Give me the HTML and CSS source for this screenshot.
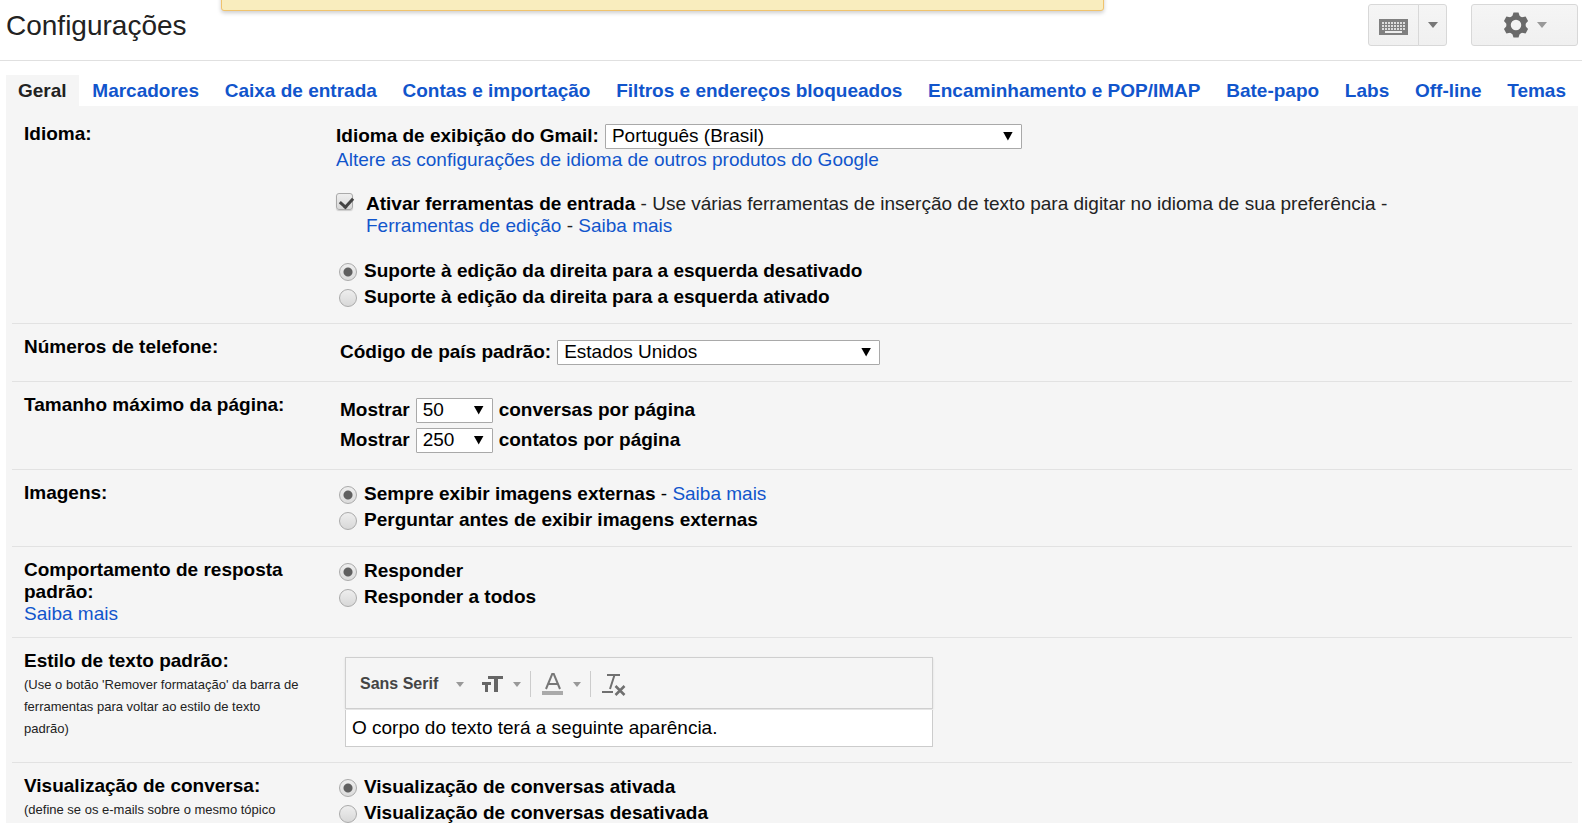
FILE: index.html
```html
<!DOCTYPE html>
<html lang="pt-BR">
<head>
<meta charset="utf-8">
<title>Configurações</title>
<link rel="stylesheet" href="styles.css">
</head>
<body>
<div class="notice"></div>
<header class="header">
  <h1 class="title">Configurações</h1>
  <div class="tools">
    <div class="split">
      <button class="btn keyboard" type="button" aria-label="Ferramentas de entrada">
        <svg width="30" height="18" viewBox="0 0 30 18"><rect x="0" y="1" width="29" height="16" fill="#808080"/><path d="M3 5h23M3 8h23M3 11h23" stroke="#ddd" stroke-width="2" stroke-dasharray="2 1"/><path d="M6 14h17" stroke="#eee" stroke-width="2"/></svg>
      </button>
      <button class="btn more" type="button" aria-label="Mais ferramentas"><span class="caret dark"></span></button>
    </div>
    <button class="btn gear" type="button" aria-label="Configurações">
      <svg width="26" height="26" viewBox="-13 -13 26 26"><circle r="7.500" fill="none" stroke="#6a6a6a" stroke-width="4.500"/><g id="teeth" fill="#6a6a6a"><path id="tooth" d="M-4-8L-2.500-12.500h5L4-8z"/><use href="#tooth" transform="rotate(60)"/><use href="#tooth" transform="rotate(120)"/><use href="#tooth" transform="rotate(180)"/><use href="#tooth" transform="rotate(240)"/><use href="#tooth" transform="rotate(300)"/></g></svg>
      <span class="caret"></span>
    </button>
  </div>
</header>
<nav class="tabs">
  <a class="tab active" href="#geral">Geral</a>
  <a class="tab" href="#marcadores">Marcadores</a>
  <a class="tab" href="#caixa">Caixa de entrada</a>
  <a class="tab" href="#contas">Contas e importação</a>
  <a class="tab" href="#filtros">Filtros e endereços bloqueados</a>
  <a class="tab" href="#encaminhamento">Encaminhamento e POP/IMAP</a>
  <a class="tab" href="#batepapo">Bate-papo</a>
  <a class="tab" href="#labs">Labs</a>
  <a class="tab" href="#offline">Off-line</a>
  <a class="tab" href="#temas">Temas</a>
</nav>
<main class="panel">
  <section class="row">
    <div class="name"><h2>Idioma:</h2></div>
    <div class="language">
      <div class="display">
        <label for="lang">Idioma de exibição do Gmail:</label>
        <span class="select wide"><select id="lang"><option>Português (Brasil)</option></select></span>
      </div>
      <a href="#idiomas">Altere as configurações de idioma de outros produtos do Google</a>
      <div class="input-tools">
        <input class="check" type="checkbox" id="tools" checked>
        <p><label for="tools">Ativar ferramentas de entrada</label> - Use várias ferramentas de inserção de texto para digitar no idioma de sua preferência - <br><a href="#edicao">Ferramentas de edição</a> - <a href="#ajuda">Saiba mais</a></p>
      </div>
      <div class="radios">
        <div class="choice"><input type="radio" name="rtl" id="rtl0" checked><label for="rtl0">Suporte à edição da direita para a esquerda desativado</label></div>
        <div class="choice"><input type="radio" name="rtl" id="rtl1"><label for="rtl1">Suporte à edição da direita para a esquerda ativado</label></div>
      </div>
    </div>
  </section>
  <section class="row">
    <div class="name"><h2>Números de telefone:</h2></div>
    <div class="selects">
      <div class="line"><label for="country">Código de país padrão:</label><span class="select medium"><select id="country"><option>Estados Unidos</option></select></span></div>
    </div>
  </section>
  <section class="row">
    <div class="name"><h2>Tamanho máximo da página:</h2></div>
    <div class="selects">
      <div class="line"><label for="conv">Mostrar</label><span class="select small"><select id="conv"><option>50</option></select></span><b>conversas por página</b></div>
      <div class="line"><label for="cont">Mostrar</label><span class="select small"><select id="cont"><option>250</option></select></span><b>contatos por página</b></div>
    </div>
  </section>
  <section class="row">
    <div class="name"><h2>Imagens:</h2></div>
    <div class="radios">
      <div class="choice"><input type="radio" name="img" id="img0" checked><span><label for="img0">Sempre exibir imagens externas</label> - <a href="#imagens">Saiba mais</a></span></div>
      <div class="choice"><input type="radio" name="img" id="img1"><label for="img1">Perguntar antes de exibir imagens externas</label></div>
    </div>
  </section>
  <section class="row">
    <div class="name"><h2>Comportamento de resposta padrão:</h2><a href="#resposta">Saiba mais</a></div>
    <div class="radios">
      <div class="choice"><input type="radio" name="reply" id="reply0" checked><label for="reply0">Responder</label></div>
      <div class="choice"><input type="radio" name="reply" id="reply1"><label for="reply1">Responder a todos</label></div>
    </div>
  </section>
  <section class="row">
    <div class="name"><h2>Estilo de texto padrão:</h2><p class="hint">(Use o botão 'Remover formatação' da barra de ferramentas para voltar ao estilo de texto padrão)</p></div>
    <div class="editor">
      <div class="toolbar">
        <button class="tool font" type="button">Sans Serif<span class="caret slim"></span></button>
        <button class="tool" type="button" aria-label="Tamanho">
          <svg width="22" height="18" viewBox="0 0 22 18"><path fill="#666" d="M6 1h15v3h-5v13h-4V4H6zM0 7h9v3H6v7H3v-7H0z"/></svg><span class="caret slim"></span></button>
        <button class="tool split-left" type="button" aria-label="Cor do texto">
          <svg width="22" height="24" viewBox="0 0 22 24"><path d="M4 17L10.200 2h1.600L18 17M6 12h10" fill="none" stroke="#777" stroke-width="2"/><path fill="#aaa" d="M0 19h21v4H0z"/></svg><span class="caret slim"></span></button>
        <button class="tool split-left" type="button" aria-label="Remover formatação">
          <svg width="24" height="24" viewBox="0 0 24 24" fill="none" stroke="#707070"><path stroke-width="2" d="M5 3h13M12.500 3L8 17M0 20h11"/><path stroke-width="2.500" d="M13.500 14l9 9M22.500 14l-9 9"/></svg></button>
      </div>
      <div class="sample">O corpo do texto terá a seguinte aparência.</div>
    </div>
  </section>
  <section class="row">
    <div class="name"><h2>Visualização de conversa:</h2><p class="hint">(define se os e-mails sobre o mesmo tópico</p></div>
    <div class="radios">
      <div class="choice"><input type="radio" name="view" id="view0" checked><label for="view0">Visualização de conversas ativada</label></div>
      <div class="choice"><input type="radio" name="view" id="view1"><label for="view1">Visualização de conversas desativada</label></div>
    </div>
  </section>
</main>
</body>
</html>
```
FILE: styles.css
```css
* { box-sizing: border-box; }
html { height: 100%; overflow: hidden; }
body {
  margin: 0;
  height: 100%;
  overflow: hidden;
  background: #fff;
  color: #000;
  font: 19px/22px "Liberation Sans", Arial, sans-serif;
}
h1, h2, p { margin: 0; font-size: inherit; }
a { color: #15c; text-decoration: none; }
label, b { font-weight: bold; }
label { color: #000; }
button, select { font: inherit; color: inherit; }
svg { display: block; }

.notice {
  position: absolute;
  top: -20px;
  left: 14%;
  right: 30.2%;
  height: 31px;
  background: #f9edbe;
  border: 1px solid #f0c36d;
  border-radius: 3px;
  box-shadow: 0 2px 4px rgba(0, 0, 0, .2);
}

.header {
  display: flex;
  justify-content: space-between;
  align-items: flex-start;
  height: 61px;
  padding: 4px 4px 0 6px;
  border-bottom: 1px solid #e0e0e0;
}
.title { padding-top: 6px; font-size: 28px; line-height: 32px; font-weight: normal; color: #222; }
.tools { display: flex; gap: 24px; }
.split { display: flex; }
.btn {
  display: flex;
  align-items: center;
  justify-content: center;
  height: 42px;
  padding: 0;
  border: 1px solid #d8d8d8;
  border-radius: 3px;
  background: linear-gradient(#f5f5f5, #f0f0f0);
}
.keyboard { width: 51px; padding-top: 4px; border-radius: 3px 0 0 3px; }
.more { width: 29px; margin-left: -1px; border-radius: 0 3px 3px 0; }
.gear { width: 107px; gap: 8px; }
.caret { border: 5px solid transparent; border-top: 6px solid #999; border-bottom: 0; }
.slim { border-width: 5px 4px 0; }
.dark { border-top-color: #777; }

.tabs { display: flex; justify-content: space-between; padding: 14px 4px 0 6px; }
.tab { padding: 5px 12px 4px; font-weight: bold; white-space: nowrap; }
.active { background: #f5f5f5; color: #222; }

.panel { margin: 0 4px 0 6px; padding: 5px 6px; background: #f5f5f5; }
.row { display: grid; grid-template-columns: 312px 1fr; padding: 12px 0; }
.row + .row { border-top: 1px solid #e2e2e2; }
.name { padding: 0 18px 0 12px; }
.hint { padding-top: 2px; font-size: 13px; color: #222; }

.display { display: flex; align-items: center; gap: 6px; height: 26px; }
.language { padding-left: 12px; }
.language .radios { margin-left: -12px; }
.input-tools { display: flex; gap: 13px; margin: 22px 0; color: #222; }
.selects { padding: 1px 0 2px 16px; }
.line { display: flex; align-items: center; gap: 6px; height: 30px; }

.select { position: relative; display: flex; }
.select::after {
  content: "";
  position: absolute;
  top: 8px;
  right: 9px;
  width: 10px;
  height: 9px;
  background: #000;
  clip-path: polygon(0 0, 100% 0, 50% 100%);
  pointer-events: none;
}
select {
  appearance: none;
  width: 100%;
  height: 25px;
  padding: 0 6px;
  border: 1px solid #a9a9a9;
  border-radius: 1px;
  background: #fff;
}
.wide { width: 417px; }
.medium { width: 323px; }
.small { width: 77px; }

.radios { padding-left: 15px; }
.choice { display: flex; gap: 7px; height: 26px; padding-top: 1px; }
input { appearance: none; flex: none; margin: 0; border: 1px solid #aaa; background: linear-gradient(#eee, #d8d8d8); }
input[type="radio"] { width: 18px; height: 18px; margin-top: 3px; border-radius: 50%; }
input[type="radio"]:checked { background: radial-gradient(circle, #606060 4px, transparent 5px), linear-gradient(#eee, #dcdcdc); }
.check { position: relative; width: 17px; height: 17px; border-radius: 3px; box-shadow: 0 1px 1px #ccc; }
.check:checked::after {
  content: "";
  position: absolute;
  left: 5px;
  top: 1px;
  width: 6px;
  height: 10px;
  border: solid #444;
  border-width: 0 3px 3px 0;
  transform: rotate(42deg);
}

.editor { width: 588px; margin: 7px 0 3px 21px; }
.toolbar {
  display: flex;
  align-items: center;
  height: 52px;
  padding: 2px 0 0 14px;
  border: 1px solid #cfcfcf;
  box-shadow: 0 1px 2px #ddd;
}
.tool { display: flex; align-items: center; height: 26px; padding: 0 9px 0 0; border: 0; background: none; gap: 9px; }
.font { padding-right: 18px; font-size: 16px; font-weight: bold; color: #444; gap: 18px; }
.split-left { padding-left: 11px; border-left: 1px solid #ccc; }
.sample { height: 37px; margin-top: 1px; padding: 7px 6px; border: 1px solid #ccc; border-top: 0; background: #fff; }
```
